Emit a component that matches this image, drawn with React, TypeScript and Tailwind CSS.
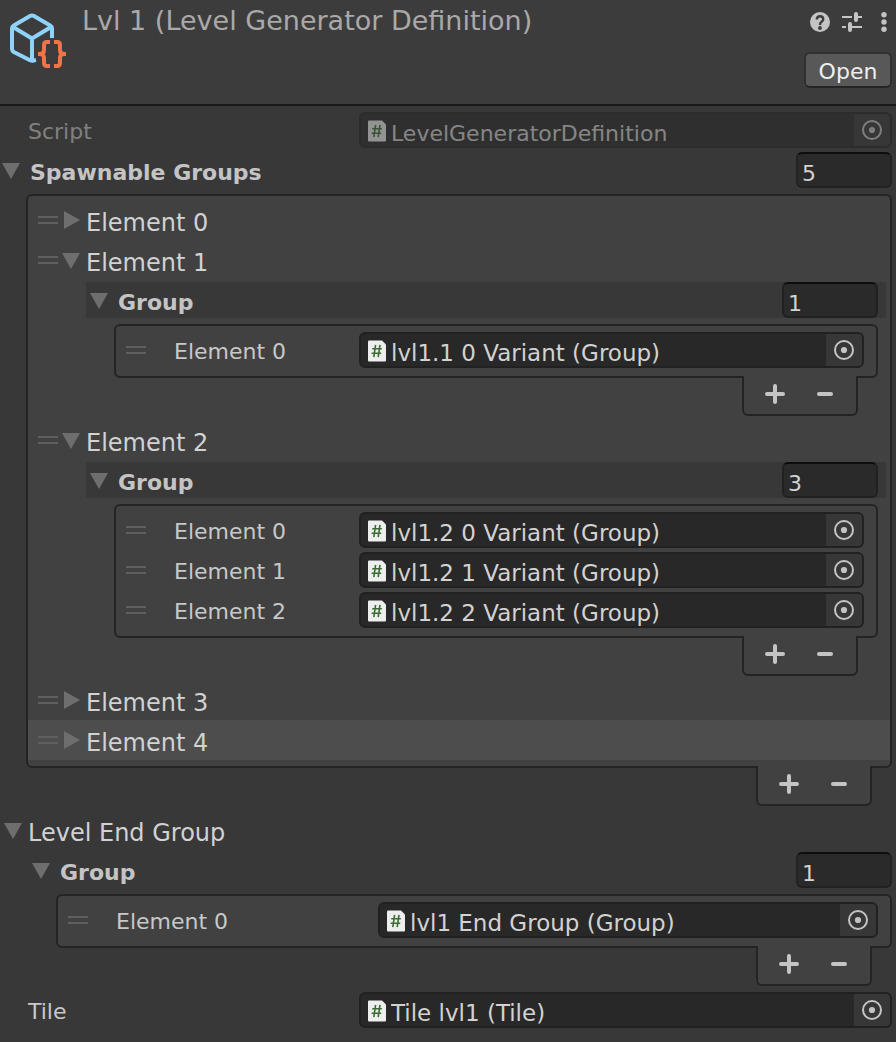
import { useId, useState, type ReactNode } from "react";

const textSmall = "text-[22px] leading-7";
const textLarge = "text-2xl leading-8";

function Triangle({ open }: { open: boolean }) {
  return (
    <svg width="18" height="18" viewBox="0 0 18 18" className="shrink-0 fill-[#6e6e6e]" aria-hidden="true">
      {open ? <path d="M0 2H18L9 18Z" /> : <path d="M2 0V18L18 9Z" />}
    </svg>
  );
}

function Handle() {
  return (
    <span className="flex w-5 shrink-0 cursor-grab flex-col gap-1" aria-hidden="true">
      <span className="h-0.5 bg-[#5f5f5f]" />
      <span className="h-0.5 bg-[#5f5f5f]" />
    </span>
  );
}

function ScriptIcon() {
  return (
    <svg width="18" height="22" viewBox="0 0 18 22" className="mt-0.5 shrink-0" aria-hidden="true">
      <path d="M1 0.5H14L18 4.5V20.5Q18 21.5 17 21.5H1Q0 21.5 0 20.5V1.5Q0 0.5 1 0.5Z" fill="#eeeeee" />
      <path d="M7.6 4.8L5.8 17.2M12 4.8L10.2 17.2M4.2 8.8H13.8M3.6 13.2H13.2" stroke="#3a6e33" strokeWidth="1.6" fill="none" />
    </svg>
  );
}

function ObjectField({
  label,
  value,
  labelClass,
  disabled = false,
}: {
  label: string;
  value: string;
  labelClass: string;
  disabled?: boolean;
}) {
  const id = useId();
  return (
    <div className={`flex min-w-0 flex-1 items-center ${disabled ? "opacity-50" : ""}`}>
      <label htmlFor={id} className={`shrink-0 pt-1 text-[#c8c8c8] ${textSmall} ${labelClass}`}>
        {label}
      </label>
      <div className="flex h-9 min-w-0 flex-1 items-center overflow-hidden rounded-md border-2 border-[#212121] bg-[#282828] pl-[7px]">
        <ScriptIcon />
        <input
          id={id}
          readOnly
          disabled={disabled}
          defaultValue={value}
          className={`h-full min-w-0 flex-1 bg-transparent pt-1.5 pl-[5px] text-[#d2d2d2] outline-none ${disabled ? textSmall : "text-[23px] leading-7"}`}
        />
        <button
          type="button"
          disabled={disabled}
          aria-label={`Select ${label}`}
          className="flex h-full w-9 shrink-0 items-center justify-center bg-[#373737]"
        >
          <svg width="20" height="20" viewBox="0 0 20 20" aria-hidden="true">
            <circle cx="10" cy="10" r="9" fill="none" stroke="#c4c4c4" strokeWidth="2" />
            <circle cx="10" cy="10" r="3.1" fill="#c4c4c4" />
          </svg>
        </button>
      </div>
    </div>
  );
}

function ListFooter() {
  return (
    <div className="-mt-0.5 mr-5 flex h-10 w-[116px] self-end rounded-b-md border-x-2 border-b-2 border-[#242424] bg-[#414141] px-1.5">
      <button type="button" aria-label="Add element" className="flex h-9 w-[50px] items-center justify-center">
        <svg width="20" height="20" viewBox="0 0 20 20" aria-hidden="true">
          <path d="M10 2V18M2 10H18" stroke="#c4c4c4" strokeWidth="4" strokeLinecap="round" />
        </svg>
      </button>
      <button type="button" aria-label="Remove element" className="flex h-9 w-[50px] items-center justify-center">
        <svg width="20" height="20" viewBox="0 0 20 20" aria-hidden="true">
          <path d="M4 10H16" stroke="#c4c4c4" strokeWidth="4" strokeLinecap="round" />
        </svg>
      </button>
    </div>
  );
}

function SizedHeader({
  title,
  size,
  open,
  onToggle,
  className,
}: {
  title: string;
  size: number;
  open: boolean;
  onToggle: () => void;
  className: string;
}) {
  return (
    <div className={`flex h-9 items-center justify-between ${className}`}>
      <button type="button" aria-expanded={open} onClick={onToggle} className="flex items-center gap-2.5">
        <Triangle open={open} />
        <span className={`pt-1.5 font-bold text-[#c4c4c4] ${textSmall}`}>{title}</span>
      </button>
      <input
        aria-label={`${title} size`}
        defaultValue={size}
        className={`h-9 w-24 rounded-md border-2 border-[#212121] border-t-[#0d0d0d] bg-[#2a2a2a] pt-1.5 pl-1 text-[#d2d2d2] outline-none ${textSmall}`}
      />
    </div>
  );
}

function GroupList({
  items,
  headerClass,
  listClass,
  labelClass,
}: {
  items: string[];
  headerClass: string;
  listClass: string;
  labelClass: string;
}) {
  const [open, setOpen] = useState(true);
  return (
    <div className="flex flex-col">
      <SizedHeader
        title="Group"
        size={items.length}
        open={open}
        onToggle={() => setOpen(!open)}
        className={headerClass}
      />
      {open && (
        <div className={`mt-1.5 flex flex-col ${listClass}`}>
          <ul className="flex flex-col gap-1 rounded-md border-2 border-[#242424] bg-[#414141] pt-1.5 pr-3 pb-2 pl-2.5">
            {items.map((item, i) => (
              <li key={item} className="flex items-center gap-7">
                <Handle />
                <ObjectField label={`Element ${i}`} value={item} labelClass={labelClass} />
              </li>
            ))}
          </ul>
          <ListFooter />
        </div>
      )}
    </div>
  );
}

function ElementRow({
  label,
  selected = false,
  children,
}: {
  label: string;
  selected?: boolean;
  children?: ReactNode;
}) {
  const [open, setOpen] = useState(Boolean(children));
  return (
    <li>
      <div className={`flex h-10 items-center gap-1 pl-2.5 ${selected ? "bg-[#4d4d4d]" : ""}`}>
        <Handle />
        <button type="button" aria-expanded={open} onClick={() => setOpen(!open)} className="flex items-center gap-1.5">
          <Triangle open={open} />
          <span className={`pt-1.5 text-[#d2d2d2] ${textLarge}`}>{label}</span>
        </button>
      </div>
      {open && children && <div className="pt-0.5 pb-1">{children}</div>}
    </li>
  );
}

function NestedGroup({ items }: { items: string[] }) {
  return (
    <GroupList
      items={items}
      headerClass="ml-[58px] mr-1 bg-[#383838] pl-1 pr-2"
      listClass="ml-[86px] mr-3"
      labelClass="w-[185px]"
    />
  );
}

function AssetIcon() {
  return (
    <svg width="60" height="60" viewBox="8 10 60 60" fill="none" strokeWidth="4" className="shrink-0" aria-hidden="true">
      <g stroke="#8fd3fb" strokeLinejoin="round">
        <path d="M52 38V28.5Q52 26.4 50.2 25.4L34 16.1Q32 15 30 16.1L13.8 25.4Q12 26.4 12 28.5V49Q12 51 13.8 52L30 60.2Q32 61.2 34 60.4L36 60" />
        <path d="M13 27L32 38.5L51 27M32 38.5V60" />
      </g>
      <g stroke="#f0744a">
        <path d="M50 42H47Q44 42 44 45V50Q44 54 40 54H38M40 54Q44 54 44 58V63Q44 66 47 66H50" />
        <path d="M54 42H57Q60 42 60 45V50Q60 54 64 54H66M64 54Q60 54 60 58V63Q60 66 57 66H54" />
      </g>
    </svg>
  );
}

function Header() {
  return (
    <header className="flex items-start border-b-2 border-[#1a1a1a] bg-[#3c3c3c] pt-2.5 pb-4 pl-2">
      <AssetIcon />
      <h1 className="-mt-[5px] ml-3.5 min-w-0 flex-1 text-[27px] leading-8 text-[#a9a9a9]">
        Lvl 1 (Level Generator Definition)
      </h1>
      <div className="flex flex-col items-end gap-5 pt-0.5">
        <div className="flex gap-3 pr-0.5">
          <button type="button" aria-label="Help">
            <svg width="20" height="20" viewBox="0 0 20 20" className="block" aria-hidden="true">
              <circle cx="10" cy="10" r="10" fill="#c4c4c4" />
              <path
                d="M6.8 7.6Q6.8 4.2 10 4.2T13.2 7.2Q13.2 8.8 11.6 9.8Q10 10.8 10 13"
                fill="none"
                stroke="#3c3c3c"
                strokeWidth="2.4"
              />
              <circle cx="10" cy="16" r="1.9" fill="#3c3c3c" />
            </svg>
          </button>
          <button type="button" aria-label="Presets">
            <svg width="20" height="20" viewBox="0 0 20 20" fill="none" stroke="#c4c4c4" className="block" aria-hidden="true">
              <path d="M0 5H10M15 5H20M0 15H4M9 15H20" strokeWidth="2" />
              <path d="M14 2V8M8 12V18" strokeWidth="4" strokeLinecap="round" />
            </svg>
          </button>
          <button type="button" aria-label="More options">
            <svg width="20" height="20" viewBox="0 0 20 20" fill="#c4c4c4" className="block" aria-hidden="true">
              <circle cx="10" cy="2.7" r="2.7" />
              <circle cx="10" cy="10" r="2.7" />
              <circle cx="10" cy="17.3" r="2.7" />
            </svg>
          </button>
        </div>
        <button
          type="button"
          className={`mr-1 h-9 w-[88px] rounded-md border-2 border-[#303030] border-b-[#242424] bg-[#585858] pt-1 text-[#eeeeee] ${textSmall}`}
        >
          Open
        </button>
      </div>
    </header>
  );
}

export default function App() {
  const [spawnOpen, setSpawnOpen] = useState(true);
  const [endOpen, setEndOpen] = useState(true);

  return (
    <div className="min-h-screen bg-[#383838] font-['DejaVu_Sans',sans-serif]">
      <Header />
      <main className="flex flex-col pt-1.5 pr-1 pb-3">
        <div className="flex pl-7">
          <ObjectField label="Script" value="LevelGeneratorDefinition" labelClass="w-[331px]" disabled />
        </div>

        <SizedHeader
          title="Spawnable Groups"
          size={5}
          open={spawnOpen}
          onToggle={() => setSpawnOpen(!spawnOpen)}
          className="mt-1 pl-0.5"
        />
        {spawnOpen && (
          <div className="mt-1.5 ml-[26px] flex flex-col">
            <ul className="rounded-md border-2 border-[#242424] bg-[#414141] pt-1 pb-1.5">
              <ElementRow label="Element 0" />
              <ElementRow label="Element 1">
                <NestedGroup items={["lvl1.1 0 Variant (Group)"]} />
              </ElementRow>
              <ElementRow label="Element 2">
                <NestedGroup
                  items={["lvl1.2 0 Variant (Group)", "lvl1.2 1 Variant (Group)", "lvl1.2 2 Variant (Group)"]}
                />
              </ElementRow>
              <ElementRow label="Element 3" />
              <ElementRow label="Element 4" selected />
            </ul>
            <ListFooter />
          </div>
        )}

        <button
          type="button"
          aria-expanded={endOpen}
          onClick={() => setEndOpen(!endOpen)}
          className="mt-1.5 mb-1 flex h-9 items-center gap-1.5 pl-1"
        >
          <Triangle open={endOpen} />
          <span className={`pt-1.5 text-[#d2d2d2] ${textLarge}`}>Level End Group</span>
        </button>
        {endOpen && (
          <GroupList
            items={["lvl1 End Group (Group)"]}
            headerClass="pl-8"
            listClass="ml-14"
            labelClass="w-[262px]"
          />
        )}

        <div className="mt-1.5 flex pl-7">
          <ObjectField label="Tile" value="Tile lvl1 (Tile)" labelClass="w-[331px]" />
        </div>
      </main>
    </div>
  );
}
